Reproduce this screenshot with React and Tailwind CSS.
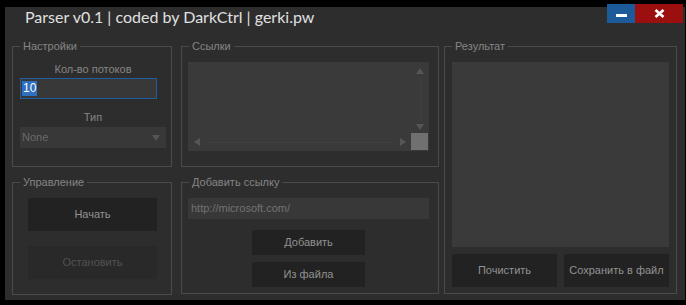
import React from 'react';

const font = { fontFamily: '"Liberation Sans", Arial, sans-serif' };

const GroupBox = ({ title, className, children }) => (
  <div className={`relative border border-[#4a4a4a] ${className}`}>
    <span className="absolute -top-[8px] left-[7px] bg-[#2d2d2d] px-[3px] text-[11px] leading-[14px] text-[#858585]">
      {title}
    </span>
    {children}
  </div>
);

const DarkButton = ({ children, className = '', disabled }) => (
  <button
    type="button"
    className={`flex items-center justify-center text-[11px] ${
      disabled ? 'bg-[#292929] text-[#525252]' : 'bg-[#222222] text-[#929292]'
    } ${className}`}
  >
    {children}
  </button>
);

const Arrow = ({ dir }) => {
  const pts = {
    up: '0,6 4,0 8,6',
    down: '0,0 8,0 4,6',
    left: '6,0 6,8 0,4',
    right: '0,0 0,8 6,4',
  };
  const vertical = dir === 'up' || dir === 'down';
  return (
    <svg width={vertical ? 8 : 6} height={vertical ? 6 : 8} viewBox={vertical ? '0 0 8 6' : '0 0 6 8'}>
      <polygon points={pts[dir]} fill="#555555" />
    </svg>
  );
};

export default function App() {
  return (
    <div className="relative h-[305px] w-[686px] overflow-hidden bg-black pl-[5px] pt-[7px]" style={font}>
      <div className="h-[293px] w-[680px] bg-[#2d2d2d]">
        <div className="h-[23px] pl-[20px] pt-[1px] text-[16px] leading-[18px] text-[#e0e0e0]" style={{ fontFamily: 'Lato, "Liberation Sans", sans-serif' }}>
          Parser v0.1 | coded by DarkCtrl | gerki.pw
        </div>

        <div className="mt-[16px] flex pl-[7px]">
          <div className="flex w-[160px] flex-col gap-[15px]">
            <GroupBox title="Настройки" className="h-[121px]">
              <div className="flex flex-col px-[7px] pt-[15px]">
                <div className="w-[146px] text-center text-[11px] leading-[15px] text-[#858585]">Кол-во потоков</div>
                <div className="mt-[1px] flex h-[21px] w-[137px] items-center border border-[#1f5d9e] bg-[#383838] pl-[1px]">
                  <span className="bg-[#2f6fc0] px-[1px] text-[12px] leading-[15px] text-white">10</span>
                </div>
                <div className="mt-[11px] w-[146px] text-center text-[11px] leading-[15px] text-[#858585]">Тип</div>
                <div className="mt-[2px] flex h-[21px] w-[146px] items-center justify-between bg-[#383838] pl-[2px] pr-[6px]">
                  <span className="text-[11px] text-[#6a6a6a]">None</span>
                  <Arrow dir="down" />
                </div>
              </div>
            </GroupBox>
            <GroupBox title="Управление" className="h-[113px]">
              <div className="flex flex-col gap-[15px] pl-[15px] pt-[15px]">
                <DarkButton className="h-[33px] w-[129px]">Начать</DarkButton>
                <DarkButton className="h-[33px] w-[129px]" disabled>
                  Остановить
                </DarkButton>
              </div>
            </GroupBox>
          </div>

          <div className="ml-[9px] flex w-[258px] flex-col gap-[15px]">
            <GroupBox title="Ссылки" className="h-[121px]">
              <div className="ml-[6px] mt-[15px] grid h-[89px] w-[241px] grid-cols-[1fr_18px] grid-rows-[1fr_18px] bg-[#3a3a3a]">
                <div />
                <div className="flex flex-col items-center justify-between pb-[3px] pt-[6px]">
                  <Arrow dir="up" />
                  <div className="my-[3px] w-px flex-1 bg-[#3f3f3f]" />
                  <Arrow dir="down" />
                </div>
                <div className="flex items-center justify-between pl-[6px] pr-[5px]">
                  <Arrow dir="left" />
                  <div className="mx-[8px] h-px flex-1 bg-[#3f3f3f]" />
                  <Arrow dir="right" />
                </div>
                <div className="mb-[1px] mr-[1px] bg-[#707070]" />
              </div>
            </GroupBox>
            <GroupBox title="Добавить ссылку" className="h-[112px]">
              <div className="flex flex-col pl-[6px] pt-[15px]">
                <div className="flex h-[21px] w-[241px] items-center bg-[#383838] pl-[3px] text-[11px] text-[#727272]">
                  http://microsoft.com/
                </div>
                <div className="ml-[64px] mt-[11px] flex flex-col gap-[7px]">
                  <DarkButton className="h-[25px] w-[113px]">Добавить</DarkButton>
                  <DarkButton className="h-[25px] w-[113px]">Из файла</DarkButton>
                </div>
              </div>
            </GroupBox>
          </div>

          <GroupBox title="Результат" className="ml-[5px] h-[248px] w-[233px]">
            <div className="flex flex-col pl-[7px] pt-[15px]">
              <div className="h-[185px] w-[217px] bg-[#3a3a3a]" />
              <div className="mt-[7px] flex gap-[7px]">
                <DarkButton className="h-[33px] w-[105px]">Почистить</DarkButton>
                <DarkButton className="h-[33px] w-[105px]">Сохранить в файл</DarkButton>
              </div>
            </div>
          </GroupBox>
        </div>
      </div>

      <div className="absolute right-[3px] top-[4px] flex h-[19px]">
        <div className="flex w-[28px] items-center justify-center bg-[#1c5a9a] pt-[3px]">
          <div className="h-[3px] w-[11px] bg-white" />
        </div>
        <div className="flex w-[48px] items-center justify-center bg-[#9b0f0f]">
          <svg width="11" height="9" viewBox="0 0 11 9">
            <path d="M1.5 1 L9.5 8 M9.5 1 L1.5 8" stroke="white" strokeWidth="2.6" />
          </svg>
        </div>
      </div>
    </div>
  );
}
